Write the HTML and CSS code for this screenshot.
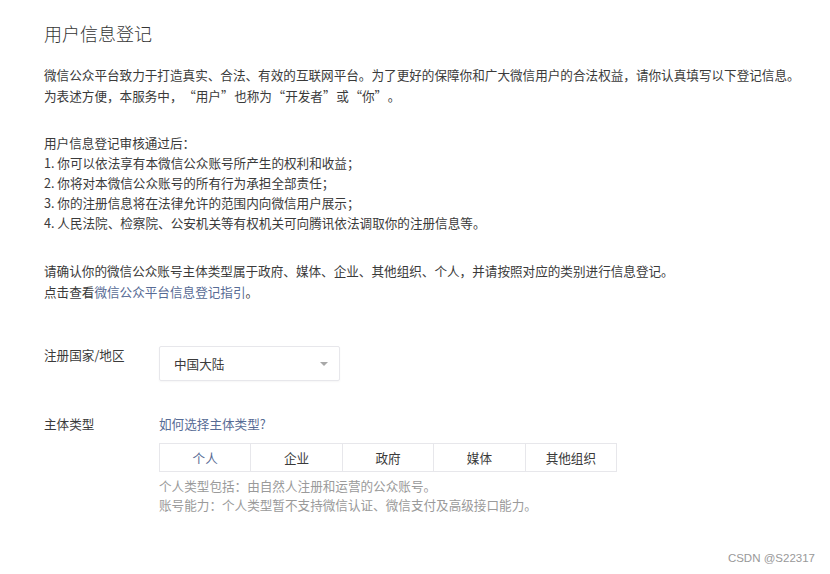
FILE: index.html
```html
<!DOCTYPE html>
<html lang="zh-CN">
<head>
<meta charset="utf-8">
<title>用户信息登记</title>
<link rel="stylesheet" href="styles.css">
</head>
<body>
<div class="page">
  <h1 class="title">用户信息登记</h1>
  <p class="para p1">微信公众平台致力于打造真实、合法、有效的互联网平台。为了更好的保障你和广大微信用户的合法权益，请你认真填写以下登记信息。<br>为表述方便，本服务中，<span class="qo">“</span>用户<span class="qc">”</span>也称为<span class="qo">“</span>开发者<span class="qc">”</span>或<span class="qo">“</span>你<span class="qc">”</span>。</p>
  <p class="para p2">用户信息登记审核通过后：<br>1. 你可以依法享有本微信公众账号所产生的权利和收益；<br>2. 你将对本微信公众账号的所有行为承担全部责任；<br>3. 你的注册信息将在法律允许的范围内向微信用户展示；<br>4. 人民法院、检察院、公安机关等有权机关可向腾讯依法调取你的注册信息等。</p>
  <p class="para p3">请确认你的微信公众账号主体类型属于政府、媒体、企业、其他组织、个人，并请按照对应的类别进行信息登记。<br>点击查看<a class="link" href="#">微信公众平台信息登记指引</a>。</p>

  <div class="form-row row1">
    <div class="label">注册国家/地区</div>
    <div class="control">
      <div class="select">
        <span>中国大陆</span>
        <span class="arrow"></span>
      </div>
    </div>
  </div>

  <div class="form-row row2">
    <div class="label">主体类型</div>
    <div class="control">
      <a class="link help" href="#">如何选择主体类型?</a>
      <div class="tabs">
        <div class="tab active">个人</div>
        <div class="tab">企业</div>
        <div class="tab">政府</div>
        <div class="tab">媒体</div>
        <div class="tab">其他组织</div>
      </div>
      <p class="note">个人类型包括：由自然人注册和运营的公众账号。<br>账号能力：个人类型暂不支持微信认证、微信支付及高级接口能力。</p>
    </div>
  </div>
</div>
<div class="watermark">CSDN @S22317</div>
</body>
</html>
```

FILE: styles.css
```css
html, body {
  margin: 0;
  padding: 0;
  background: #ffffff;
}
body {
  font-family: "Noto Sans CJK SC", "Noto Sans", sans-serif;
  font-size: 12.6px;
  color: #3a3a3a;
  width: 830px;
  height: 574px;
  overflow: hidden;
  position: relative;
}
.page {
  padding: 21px 0 0 44px;
}
.title {
  margin: 0;
  font-size: 18px;
  font-weight: 300;
  line-height: 24px;
  color: #353535;
}
.para {
  margin: 0;
  white-space: nowrap;
}
.qo,
.qc {
  display: inline-block;
  width: 1.05em;
}
.qo {
  text-align: right;
}
.qc {
  text-align: left;
}
.p1 {
  margin-top: 19px;
  line-height: 21px;
}
.p2 {
  margin-top: 27px;
  line-height: 20px;
}
.p3 {
  margin-top: 27px;
  line-height: 21px;
}
.link {
  color: #576b95;
  text-decoration: none;
}
.form-row {
  display: flex;
}
.row1 {
  margin-top: 43px;
}
.row2 {
  margin-top: 33px;
}
.label {
  width: 115px;
  flex: none;
  line-height: 20px;
}
.select {
  box-sizing: border-box;
  width: 181px;
  height: 35px;
  border: 1px solid #e7e7eb;
  border-radius: 2px;
  box-shadow: 0 1px 2px rgba(0,0,0,0.04);
  display: flex;
  align-items: center;
  justify-content: space-between;
  padding: 0 11px 0 14px;
  margin-top: 1px;
}
.arrow {
  width: 0;
  height: 0;
  border-left: 4px solid transparent;
  border-right: 4px solid transparent;
  border-top: 4px solid #a8a8a8;
}
.help {
  display: block;
  line-height: 20px;
}
.tabs {
  display: flex;
  margin-top: 9px;
  width: 458px;
  box-sizing: border-box;
  border: 1px solid #e7e7eb;
}
.tab {
  flex: 1;
  height: 27px;
  line-height: 27px;
  text-align: center;
  border-left: 1px solid #e7e7eb;
}
.tab:first-child {
  border-left: none;
}
.tab.active {
  color: #576b95;
}
.note {
  margin: 4px 0 0;
  line-height: 19px;
  color: #9a9a9a;
  white-space: nowrap;
}
.watermark {
  position: absolute;
  right: 15px;
  top: 551px;
  font-family: "Liberation Sans", Arial, sans-serif;
  font-size: 11.5px;
  line-height: 14px;
  color: #999999;
}
```
